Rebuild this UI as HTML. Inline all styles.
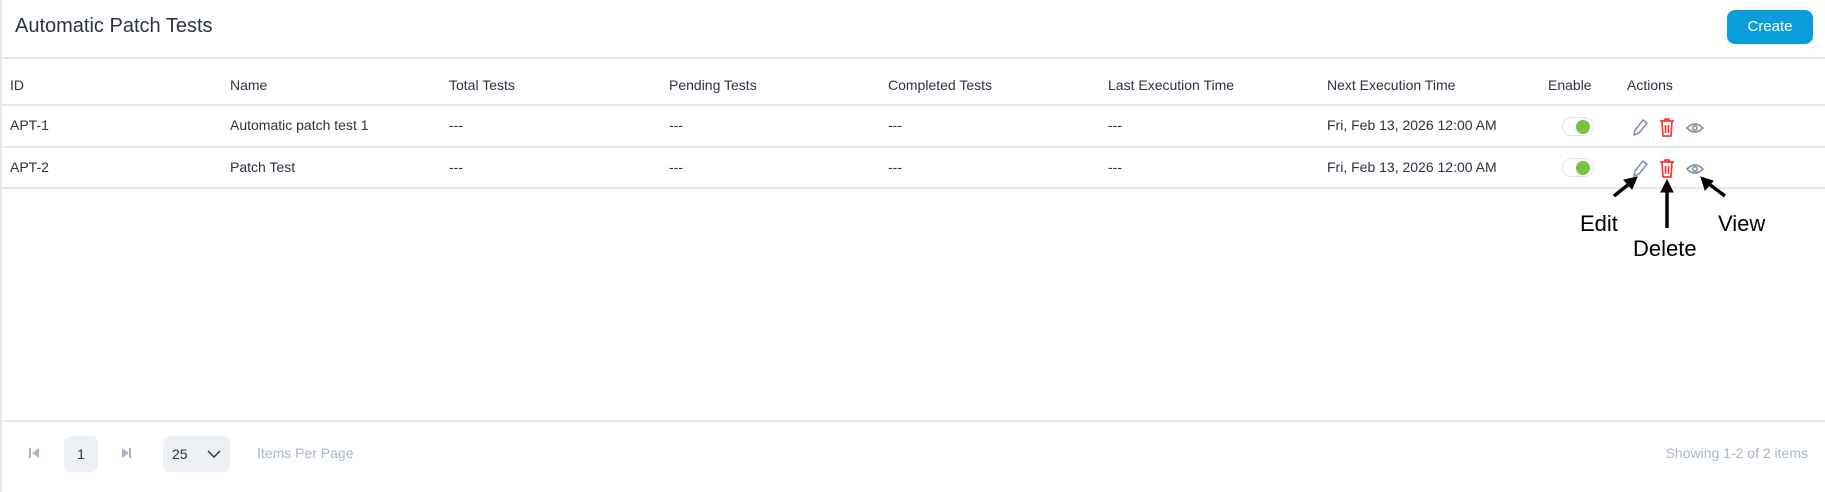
<!DOCTYPE html>
<html><head><meta charset="utf-8"><style>
*{margin:0;padding:0;box-sizing:border-box}
body{width:1825px;height:492px;background:#fff;font-family:"Liberation Sans",sans-serif;color:#2c3340;position:relative;overflow:hidden}
.abs{position:absolute;white-space:nowrap}
.lb{position:absolute;left:0;top:0;width:2px;height:492px;background:#e3e8ef}
.hl{position:absolute;left:0;width:1825px;height:2px;background:#e3e8ef}
.t{font-size:14px;color:#2c3340}
.h{font-size:14px;color:#2c3340}
.tog{position:absolute;width:32px;height:19px;border:1px solid #e1e5ea;border-radius:10px;background:#fff}
.tog i{position:absolute;right:3px;top:2px;width:14px;height:14px;border-radius:50%;background:#7cc242}
.ann{font-size:22px;color:#000;position:absolute}
</style></head><body>
<div class="lb"></div>
<div class="abs" style="left:15px;top:15px;font-size:20px;color:#2c3340">Automatic Patch Tests</div>
<div class="abs" style="left:1727px;top:10px;width:86px;height:34px;background:#0a9ddb;border-radius:8px;color:#fff;font-size:15px;text-align:center;line-height:34px">Create</div>
<div class="hl" style="top:57px"></div>
<div class="hl" style="top:104px"></div>
<div class="hl" style="top:146px"></div>
<div class="hl" style="top:187px"></div>
<div class="hl" style="top:420px"></div>
<div class="abs h" style="left:10px;top:77px">ID</div>
<div class="abs h" style="left:230px;top:77px">Name</div>
<div class="abs h" style="left:449px;top:77px">Total Tests</div>
<div class="abs h" style="left:669px;top:77px">Pending Tests</div>
<div class="abs h" style="left:888px;top:77px">Completed Tests</div>
<div class="abs h" style="left:1108px;top:77px">Last Execution Time</div>
<div class="abs h" style="left:1327px;top:77px">Next Execution Time</div>
<div class="abs h" style="left:1548px;top:77px">Enable</div>
<div class="abs h" style="left:1627px;top:77px">Actions</div>

<div class="abs t" style="left:10px;top:117px">APT-1</div>
<div class="abs t" style="left:230px;top:117px">Automatic patch test 1</div>
<div class="abs t" style="left:449px;top:117px">---</div>
<div class="abs t" style="left:669px;top:117px">---</div>
<div class="abs t" style="left:888px;top:117px">---</div>
<div class="abs t" style="left:1108px;top:117px">---</div>
<div class="abs t" style="left:1327px;top:117px">Fri, Feb 13, 2026 12:00 AM</div>
<div class="tog" style="left:1562px;top:117px"><i></i></div>

<div class="abs t" style="left:10px;top:159px">APT-2</div>
<div class="abs t" style="left:230px;top:159px">Patch Test</div>
<div class="abs t" style="left:449px;top:159px">---</div>
<div class="abs t" style="left:669px;top:159px">---</div>
<div class="abs t" style="left:888px;top:159px">---</div>
<div class="abs t" style="left:1108px;top:159px">---</div>
<div class="abs t" style="left:1327px;top:159px">Fri, Feb 13, 2026 12:00 AM</div>
<div class="tog" style="left:1562px;top:158px"><i></i></div>

<svg class="abs" style="left:0;top:0" width="1825" height="492">
<g id="ic">
<g fill="none" stroke="#8593a8" stroke-width="1.6" stroke-linejoin="round">
<path d="M1634 135 L1635 130 L1643 120 L1647 123 L1639 133 Z"/>
</g>
<g fill="none" stroke="#ef3b34" stroke-width="1.7" stroke-linejoin="round">
<path d="M1660 121h14M1665 121v-2h4v2M1662 121l1 15h8l1-15M1665.5 125v8M1668.5 125v8"/>
</g>
<g fill="none" stroke="#8593a8" stroke-width="1.6">
<path d="M1687 128 Q1695 120 1703 128 Q1695 136 1687 128Z"/><circle cx="1695" cy="128" r="2.2"/>
</g>
</g>
<use href="#ic" y="41"/>
<g stroke="#000" stroke-width="3.5" fill="#000">
<path d="M1614 196 L1629 184"/><path d="M1637 177 L1624 180 L1632 189Z" stroke-width="1"/>
<path d="M1667 228 L1667 190"/><path d="M1667 180 L1661 192 L1673 192Z" stroke-width="1"/>
<path d="M1725 196 L1709 184"/><path d="M1701 177 L1705 190 L1713 181Z" stroke-width="1"/>
</g>
<g fill="#a9b6c8">
<rect x="29" y="448" width="2" height="10"/><path d="M39 448 L32 453 L39 458Z"/>
<path d="M122 448 L129 453 L122 458Z"/><rect x="129" y="448" width="2" height="10"/>
</g>
</svg>
<div class="ann" style="left:1580px;top:211px">Edit</div>
<div class="ann" style="left:1633px;top:236px">Delete</div>
<div class="ann" style="left:1718px;top:211px">View</div>

<div class="abs" style="left:64px;top:436px;width:34px;height:36px;background:#edf0f4;border-radius:7px;text-align:center;line-height:36px;font-size:14px;color:#2c3340">1</div>
<div class="abs" style="left:163px;top:436px;width:67px;height:36px;background:#edf0f4;border-radius:7px;font-size:14px;color:#2c3340;line-height:36px;padding-left:9px">25</div>
<svg class="abs" style="left:207px;top:449px" width="14" height="10"><path d="M1 2 L7 8 L13 2" fill="none" stroke="#2c3340" stroke-width="1.5"/></svg>
<div class="abs" style="left:257px;top:445px;font-size:14px;color:#a9b6c8">Items Per Page</div>
<div class="abs" style="right:17px;top:445px;font-size:14px;color:#a9b6c8">Showing 1-2 of 2 items</div>
</body></html>
